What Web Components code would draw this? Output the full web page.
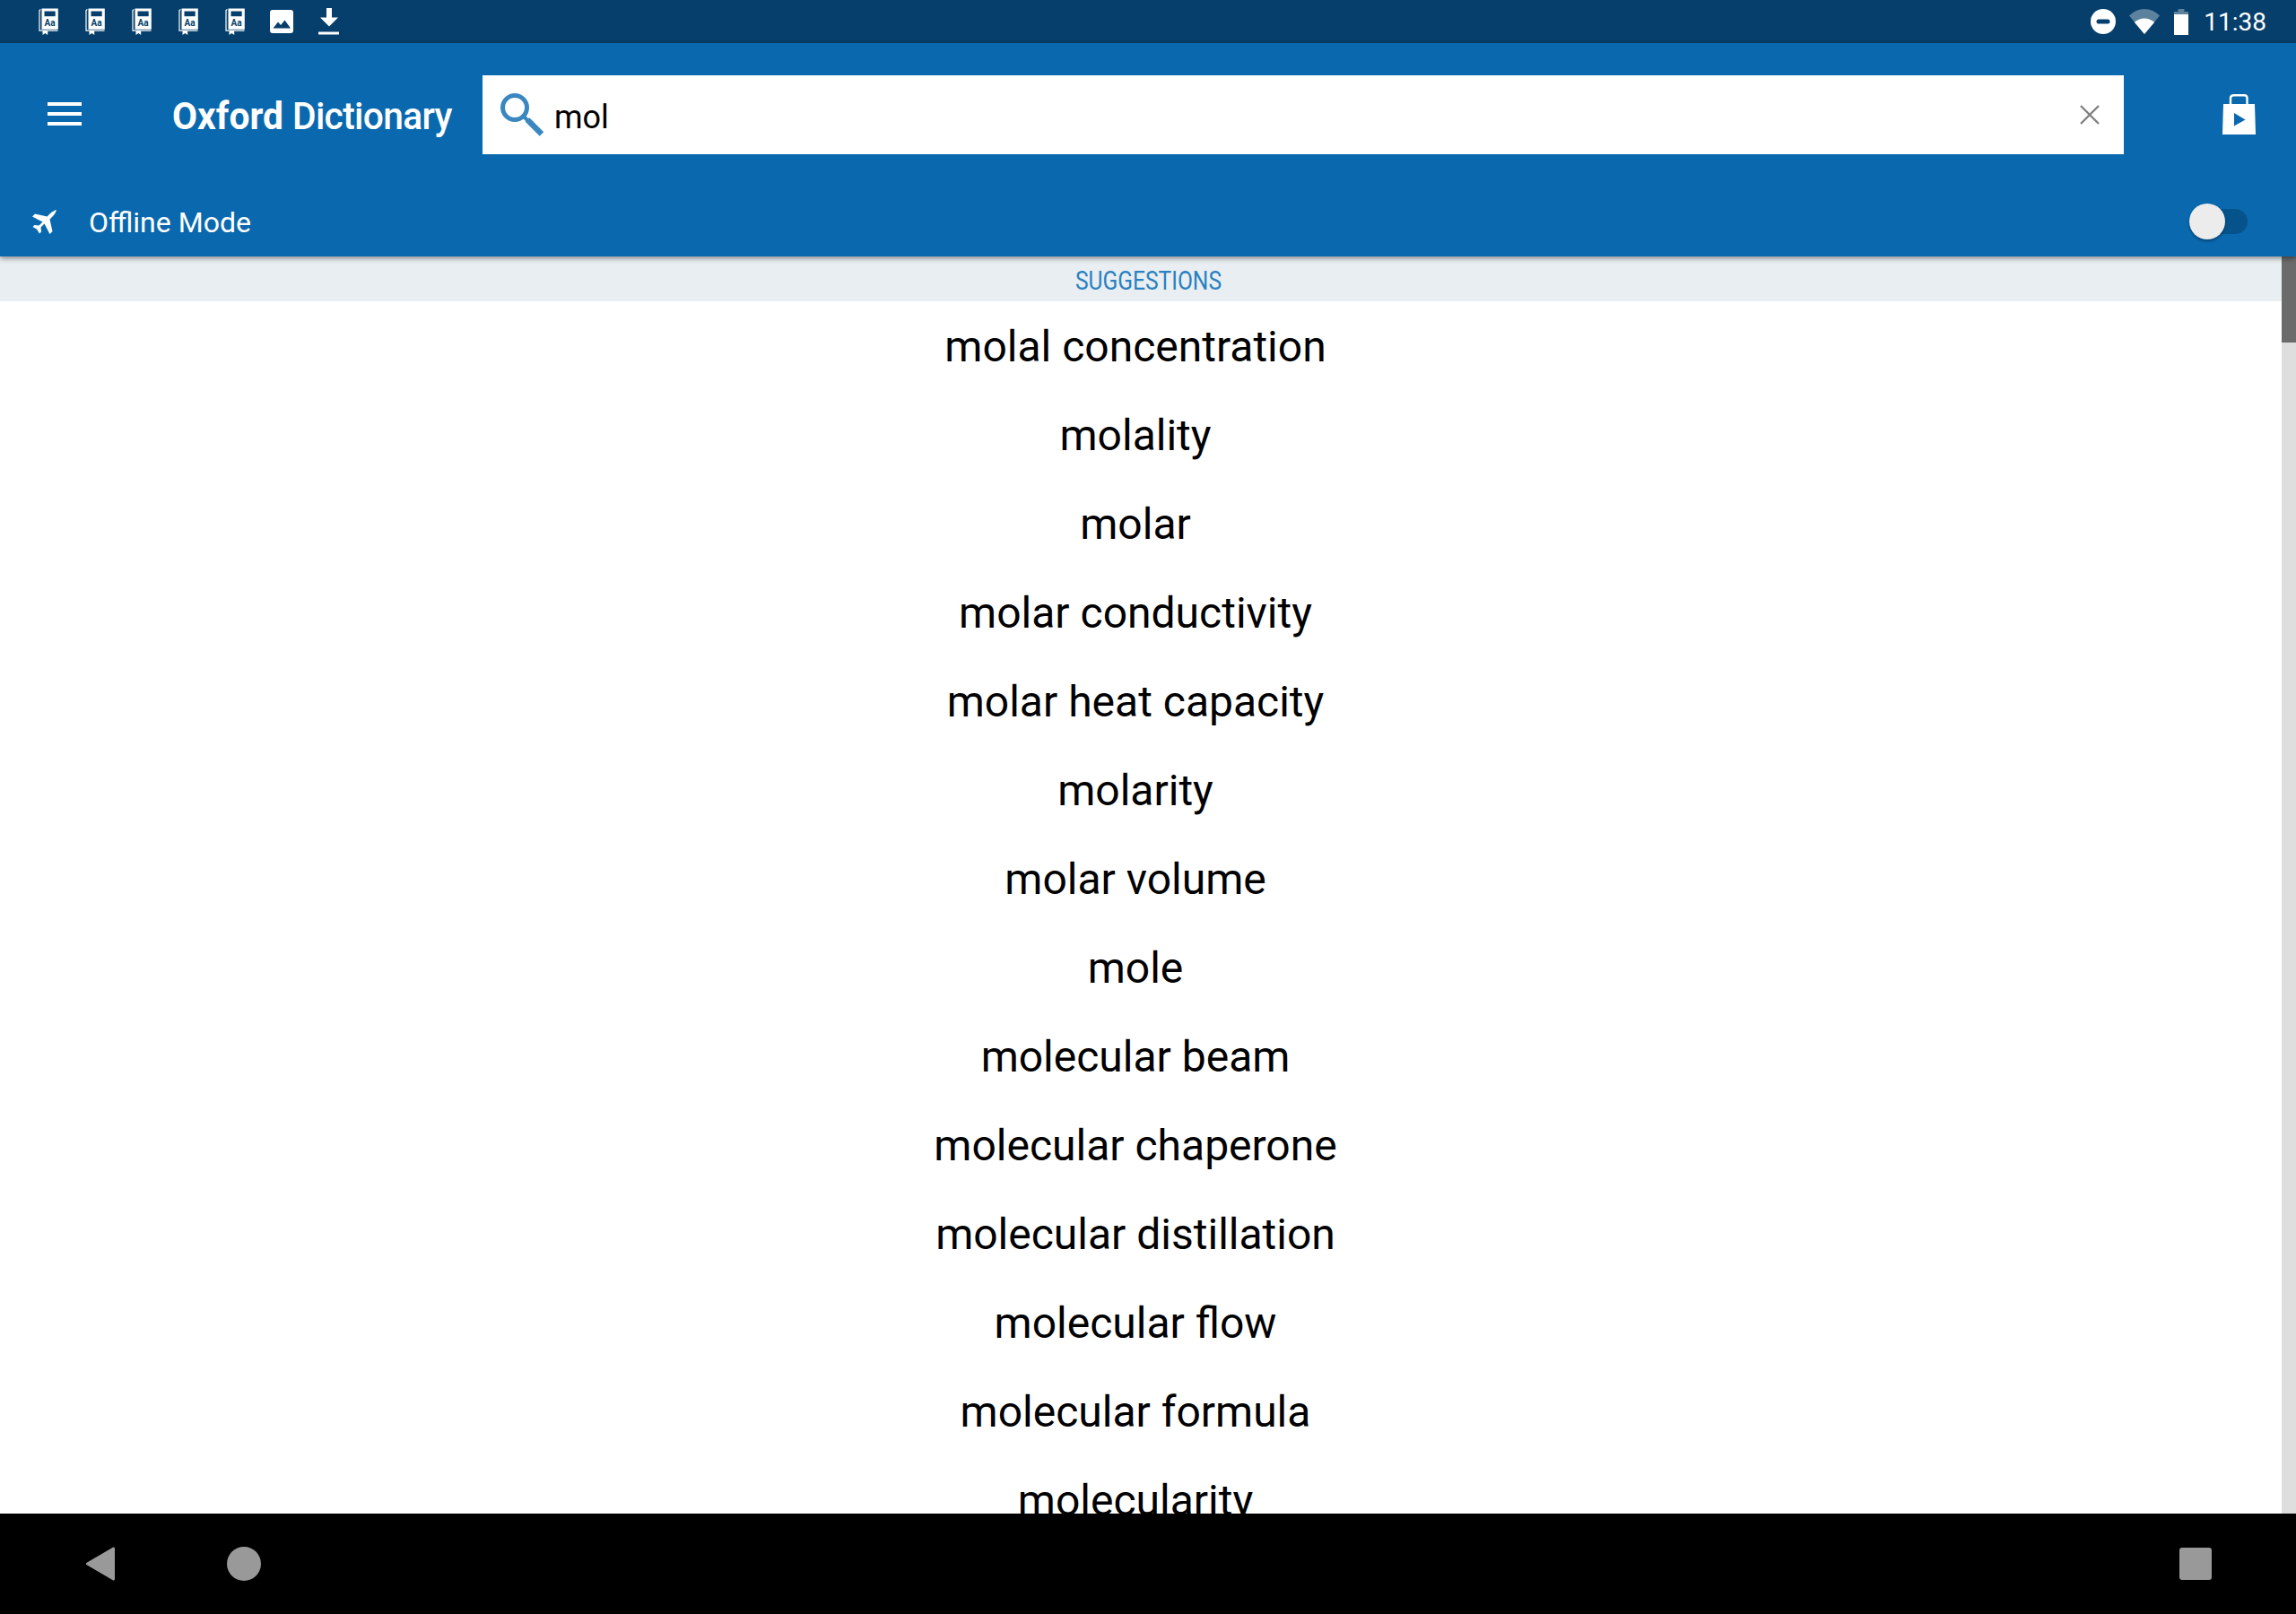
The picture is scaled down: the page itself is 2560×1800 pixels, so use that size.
<!DOCTYPE html>
<html>
<head>
<meta charset="utf-8">
<title>Oxford Dictionary</title>
<style>
  html, body { margin: 0; height: 100%; background: #fff; }
  body {
    display: flex;
    flex-direction: column;
    width: 2560px;
    height: 1800px;
    overflow: hidden;
    font-family: Roboto, "Liberation Sans", sans-serif;
  }
</style>
</head>
<body>
  <status-bar time="11:38"></status-bar>
  <app-toolbar heading="Dictionary" brand="Oxford" query="mol"></app-toolbar>
  <suggestion-panel>
    <suggestion-item>molal concentration</suggestion-item>
    <suggestion-item>molality</suggestion-item>
    <suggestion-item>molar</suggestion-item>
    <suggestion-item>molar conductivity</suggestion-item>
    <suggestion-item>molar heat capacity</suggestion-item>
    <suggestion-item>molarity</suggestion-item>
    <suggestion-item>molar volume</suggestion-item>
    <suggestion-item>mole</suggestion-item>
    <suggestion-item>molecular beam</suggestion-item>
    <suggestion-item>molecular chaperone</suggestion-item>
    <suggestion-item>molecular distillation</suggestion-item>
    <suggestion-item>molecular flow</suggestion-item>
    <suggestion-item>molecular formula</suggestion-item>
    <suggestion-item>molecularity</suggestion-item>
  </suggestion-panel>
  <nav-bar></nav-bar>

<script>
const bookIcon = `
  <svg width="22" height="30" viewBox="0 0 22 30">
    <path fill="none" stroke="#fff" stroke-width="1.2" d="M2.4 1.5 1 2.5V25.2H21.5"/>
    <path fill="#fff" d="M3.5 0.5H21.8V23.8H3.5z"/>
    <path fill="#063f6b" d="M6.5 3.5H18.7V9.2H6.5z"/>
    <text x="12.6" y="20" text-anchor="middle" font-family="Roboto, sans-serif" font-weight="700" font-size="10" fill="#063f6b">Aa</text>
    <path fill="#fff" d="M4.5 25H10.2V30L7.4 28 4.5 30z"/>
  </svg>`;

class StatusBar extends HTMLElement {
  constructor() {
    super();
    this.attachShadow({ mode: 'open' });
    this.shadowRoot.innerHTML = `
      <style>
        :host { display: flex; flex: none; height: 48px; background: #063f6b; color: #fff; align-items: center; padding: 0 33px 0 43px; box-sizing: border-box; }
        .left { display: flex; align-items: center; gap: 30px; flex: 1; }
        .left svg { display: block; }
        .right { display: flex; align-items: center; }
        .time { font-size: 28px; margin-left: 17px; }
        .wifi { margin: 0 16px 0 15px; }
      </style>
      <div class="left">
        ${bookIcon}${bookIcon}${bookIcon}${bookIcon}${bookIcon}
        <svg width="26" height="26" viewBox="0 0 26 26" style="margin-left:-2px">
          <rect width="26" height="26" rx="3" fill="#fff"/>
          <path fill="#063f6b" d="M3.5 20.5 9 13.5 12 17 16.5 11.5 23 20.5z"/>
        </svg>
        <svg width="24" height="30" viewBox="0 0 24 30" style="margin-left:-2px">
          <path fill="#fff" d="M9 0H15V10.5H22L12 20.5 2 10.5H9z"/>
          <path fill="#fff" d="M0 26.5H23V29.5H0z"/>
        </svg>
      </div>
      <div class="right">
        <svg width="28" height="28" viewBox="0 0 28 28">
          <circle cx="14" cy="14" r="14" fill="#fff"/>
          <rect x="6.5" y="11.5" width="15" height="5" rx="2.5" fill="#063f6b"/>
        </svg>
        <svg class="wifi" width="34" height="28" viewBox="0 0 34 28">
          <path fill="#fff" fill-opacity=".35" d="M0 7.5C4.5 3 10.5 0 17 0S29.5 3 34 7.5L17 28z"/>
          <path fill="#fff" d="M5.8 14.7C9 12 12.800 10.400 17 10.400S25 12 28.200 14.700L17 28z"/>
        </svg>
        <svg width="16" height="29" viewBox="0 0 16 29">
          <path fill="#fff" fill-opacity=".35" d="M4.500 0H11.500V3H16V8H0V3H4.500z"/>
          <path fill="#fff" d="M0 6H16V29H0z"/>
        </svg>
        <span class="time">${this.getAttribute('time')}</span>
      </div>`;
  }
}

class AppToolbar extends HTMLElement {
  constructor() {
    super();
    this.attachShadow({ mode: 'open' });
    this.shadowRoot.innerHTML = `
      <style>
        :host { display: block; flex: none; position: relative; z-index: 2; background: #0a69ae; color: #fff; height: 238px; box-shadow: 0 2px 6px rgba(0,0,0,.45); }
        .top { display: flex; align-items: flex-end; height: 124px; box-sizing: border-box; }
        .menu { margin: 0 0 32px 53px; width: 38px; height: 26px; display: block; }
        .title { margin: 0 0 19px 101px; width: 346px; font-size: 42px; line-height: 47px; white-space: nowrap; transform: scaleX(.97); transform-origin: left center; }
        .title b { font-weight: 700; }
        .title span { font-weight: 500; letter-spacing: -.7px; }
        search-box { width: 1830px; }
        .bag { margin: 0 0 22px 110px; display: block; }
        .bottom { display: flex; align-items: center; height: 114px; padding: 36px 0 0 36px; box-sizing: border-box; }
        .plane { display: block; }
        .label { margin-left: 36px; font-size: 32px; flex: 1; padding-top: 2px; }
        offline-switch { margin-right: 54px; }
      </style>
      <div class="top">
        <svg class="menu" viewBox="0 0 38 26">
          <path fill="#fff" d="M0 0H38V4H0zM0 11H38V15H0zM0 22H38V26H0z"/>
        </svg>
        <div class="title"><b>${this.getAttribute('brand')}</b> <span>${this.getAttribute('heading')}</span></div>
        <search-box value="${this.getAttribute('query')}"></search-box>
        <svg class="bag" width="37" height="45" viewBox="0 0 37 45">
          <path fill="none" stroke="#fff" stroke-width="2.400" d="M9 12V4.500C9 2.500 10.500 1.200 12.500 1.200H24.500C26.500 1.200 27.500 2.500 27.500 4.500V12"/>
          <path fill="#fff" d="M1 11H36L37 45H0z"/>
          <path fill="#0a69ae" d="M13 21 25.500 28.500 13 35.500z"/>
        </svg>
      </div>
      <div class="bottom">
        <svg class="plane" width="27" height="27" viewBox="0 0 27 27">
          <path fill="#fff" d="M27 0C26 3 24.500 5.500 22.500 7.500L19.500 10.500 22.500 24 19.500 27 13.500 15.500 9.500 19.500 10 24.500 8 26.500 5.200 21.800 .5 19 2.500 17 7.500 17.500 11.500 13.500 0 7.500 3 4.500 16.500 7.500 19.500 4.500C21.500 2.500 24 1 27 0z"/>
        </svg>
        <span class="label">Offline Mode</span>
        <offline-switch></offline-switch>
      </div>`;
  }
}

class SearchBox extends HTMLElement {
  constructor() {
    super();
    this.attachShadow({ mode: 'open' });
    this.shadowRoot.innerHTML = `
      <style>
        :host { display: flex; align-items: center; height: 88px; background: #fff; color: #000; padding: 0 27px 0 20px; box-sizing: border-box; }
        svg { display: block; flex: none; }
        .value { flex: 1; margin-left: 12px; font-size: 36px; padding-top: 6px; line-height: 82px; }
      </style>
      <svg width="48" height="48" viewBox="0 0 48 48">
        <circle cx="16" cy="16" r="13.500" fill="none" stroke="#3a87bf" stroke-width="5"/>
        <path d="M25 25 31 31" fill="none" stroke="#3a87bf" stroke-width="4"/>
        <path d="M30 29.500 46 45.500" fill="none" stroke="#3a87bf" stroke-width="6.500"/>
      </svg>
      <span class="value">${this.getAttribute('value')}</span>
      <svg width="22" height="22" viewBox="0 0 22 22">
        <path d="M1 1 21 21M21 1 1 21" fill="none" stroke="#808080" stroke-width="2.400"/>
      </svg>`;
  }
}

class OfflineSwitch extends HTMLElement {
  constructor() {
    super();
    this.attachShadow({ mode: 'open' });
    this.shadowRoot.innerHTML = `
      <style>
        :host { display: block; position: relative; width: 65px; height: 28px; background: #06538c; border-radius: 14px; }
        .thumb { position: absolute; left: 0; top: -6px; width: 40px; height: 40px; border-radius: 50%; background: #ececec; box-shadow: 0 2px 3px rgba(0,0,0,.35); }
      </style>
      <div class="thumb"></div>`;
  }
}

class SuggestionPanel extends HTMLElement {
  constructor() {
    super();
    this.attachShadow({ mode: 'open' });
    this.shadowRoot.innerHTML = `
      <style>
        :host { display: flex; flex: 1; min-height: 0; }
        .main { flex: 1; min-width: 0; display: flex; flex-direction: column; }
        .band { flex: none; height: 50px; box-sizing: border-box; padding: 4px 0 0 16px; background: #e9eef2; color: #2a81c0; text-align: center; font-size: 30px; line-height: 46px; }
        .band span { display: inline-block; transform: scaleX(.82); }
        .list { flex: 1; min-height: 0; overflow: hidden; padding: 1px 12px 0 0; }
        .bar { flex: none; width: 16px; background: #dedede; }
        .thumb { height: 96px; background: #6b6b6b; }
      </style>
      <div class="main">
        <div class="band"><span>SUGGESTIONS</span></div>
        <div class="list"><slot></slot></div>
      </div>
      <div class="bar"><div class="thumb"></div></div>`;
  }
}

class SuggestionItem extends HTMLElement {
  constructor() {
    super();
    this.attachShadow({ mode: 'open' });
    this.shadowRoot.innerHTML = `
      <style>
        :host { display: block; height: 99px; line-height: 99px; text-align: center; font-size: 48px; color: #000; white-space: nowrap; }
      </style>
      <slot></slot>`;
  }
}

class NavBar extends HTMLElement {
  constructor() {
    super();
    this.attachShadow({ mode: 'open' });
    this.shadowRoot.innerHTML = `
      <style>
        :host { display: flex; flex: none; height: 112px; background: #000; align-items: center; padding: 0 94px 0 96px; box-sizing: border-box; }
        svg { display: block; }
        .home { margin-left: 125px; }
        .recents { margin-left: auto; }
      </style>
      <svg width="32" height="38" viewBox="0 0 32 38">
        <path fill="#999" stroke="#999" stroke-width="3" stroke-linejoin="round" d="M1.500 19 30.500 2V36z"/>
      </svg>
      <svg class="home" width="38" height="38" viewBox="0 0 38 38"><circle cx="19" cy="19" r="19" fill="#999"/></svg>
      <svg class="recents" width="36" height="36" viewBox="0 0 36 36"><rect width="36" height="36" rx="3" fill="#999"/></svg>`;
  }
}

customElements.define('status-bar', StatusBar);
customElements.define('search-box', SearchBox);
customElements.define('offline-switch', OfflineSwitch);
customElements.define('app-toolbar', AppToolbar);
customElements.define('suggestion-panel', SuggestionPanel);
customElements.define('suggestion-item', SuggestionItem);
customElements.define('nav-bar', NavBar);
</script>
</body>
</html>
